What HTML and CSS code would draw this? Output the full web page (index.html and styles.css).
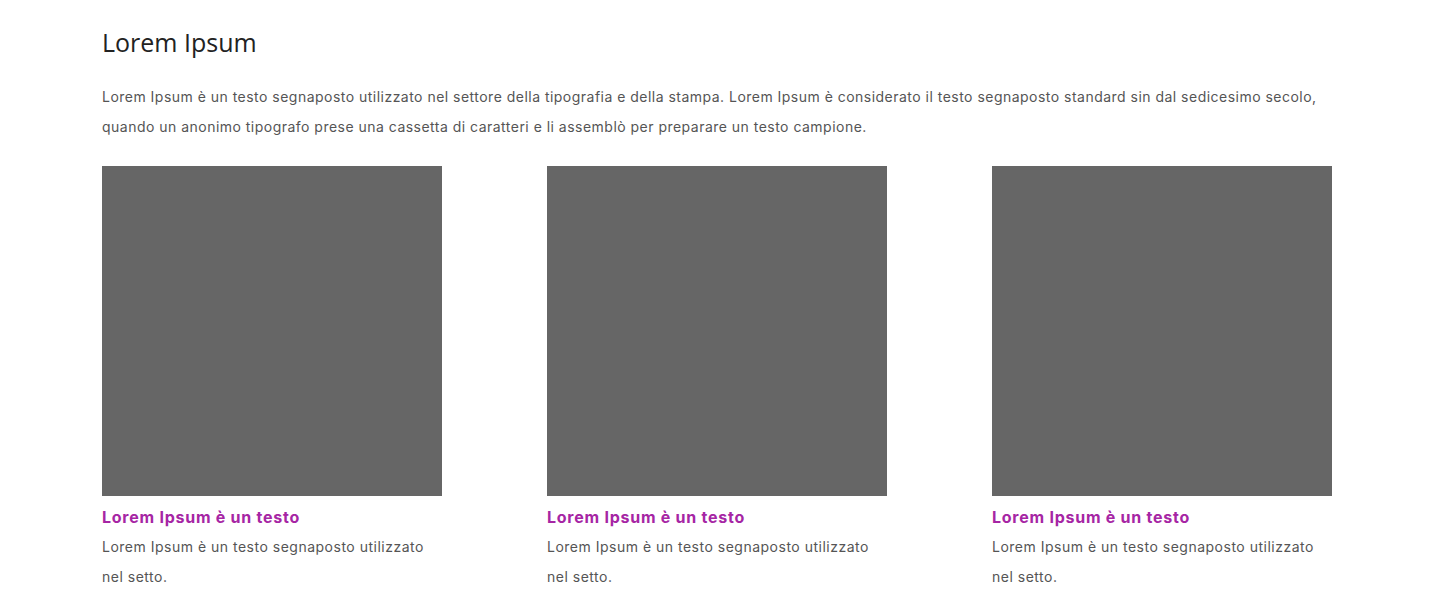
FILE: index.html
```html
<!DOCTYPE html>
<html lang="it">
<head>
<meta charset="utf-8">
<title>Lorem Ipsum</title>
<link rel="stylesheet" href="styles.css">
</head>
<body>
<main class="page">
  <h1 class="page-title">Lorem Ipsum</h1>
  <p class="intro">Lorem Ipsum è un testo segnaposto utilizzato nel settore della tipografia e della stampa. Lorem Ipsum è considerato il testo segnaposto standard sin dal sedicesimo secolo, quando un anonimo tipografo prese una cassetta di caratteri e li assemblò per preparare un testo campione.</p>
  <section class="cards">
    <article class="card">
      <div class="card-image"></div>
      <h2 class="card-title">Lorem Ipsum è un testo</h2>
      <p class="card-text">Lorem Ipsum è un testo segnaposto utilizzato nel setto.</p>
    </article>
    <article class="card">
      <div class="card-image"></div>
      <h2 class="card-title">Lorem Ipsum è un testo</h2>
      <p class="card-text">Lorem Ipsum è un testo segnaposto utilizzato nel setto.</p>
    </article>
    <article class="card">
      <div class="card-image"></div>
      <h2 class="card-title">Lorem Ipsum è un testo</h2>
      <p class="card-text">Lorem Ipsum è un testo segnaposto utilizzato nel setto.</p>
    </article>
  </section>
</main>
</body>
</html>
```

FILE: styles.css
```css
* { box-sizing: border-box; }
html, body { margin: 0; padding: 0; background: #fff; }
body {
  font-family: Inter, "Liberation Sans", sans-serif;
  color: #555;
}
.page {
  width: 1230px;
  margin-left: 102px;
  padding-top: 26px;
}
.page-title {
  margin: 0;
  font-family: "Open Sans", sans-serif;
  font-weight: 400;
  font-size: 25px;
  line-height: 32px;
  color: #222;
}
.intro {
  margin: 24px 0 0;
  font-size: 14px;
  line-height: 30px;
  letter-spacing: 0.48px;
  color: #555;
}
.cards {
  display: flex;
  justify-content: space-between;
  margin-top: 24px;
}
.card { width: 340px; }
.card-image {
  height: 330px;
  background: #666;
}
.card-title {
  margin: 9px 0 0;
  font-size: 16px;
  line-height: 24px;
  font-weight: 700;
  letter-spacing: 0.75px;
  color: #a625a4;
}
.card-text {
  margin: 3px 0 0;
  font-size: 14px;
  line-height: 30px;
  letter-spacing: 0.5px;
  width: 335px;
}
```
